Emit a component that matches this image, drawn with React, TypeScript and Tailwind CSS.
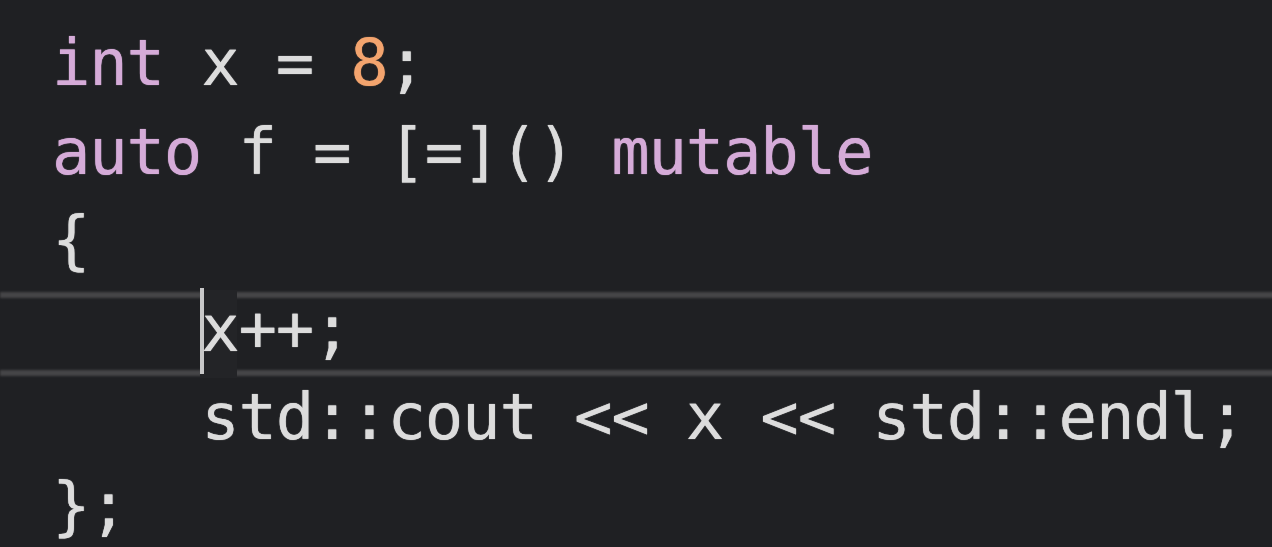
const kw = "text-[#d5abd8]";
const num = "text-[#f3a46e]";

function Line({ children, current }: { children?: React.ReactNode; current?: boolean }) {
  return (
    <div className="relative h-[88.6px] whitespace-pre">
      {current && (
        <>
          <span aria-hidden className="absolute inset-x-[-52px] top-[7px] h-[84px] border-y-[6px] border-[#454547] blur-[0.8px]" />
          <span aria-hidden className="absolute left-[148px] top-[5px] h-[88px] w-[37px] bg-[#232427]" />
          <span aria-hidden className="absolute left-[148px] top-[3px] h-[86px] w-[4px] bg-[#c8c8c8]" />
        </>
      )}
      <span className="relative">{children}</span>
    </div>
  );
}

export default function App() {
  return (
    <div className="h-[547px] w-[1272px] overflow-hidden bg-[#1f2023] pl-[52px] pt-[19px] font-['DejaVu_Sans_Mono',monospace] text-[64px] leading-[88.6px] tracking-[-1.25px] text-[#dcdcdc] antialiased [text-shadow:0_0_1px_currentColor]">
      <Line>
        <span className={kw}>int</span> x = <span className={num}>8</span>;
      </Line>
      <Line>
        <span className={kw}>auto</span> f = [=]() <span className={kw}>mutable</span>
      </Line>
      <Line>{"{"}</Line>
      <Line current>{"    x++;"}</Line>
      <Line>{"    std::cout << x << std::endl;"}</Line>
      <Line>{"};"}</Line>
    </div>
  );
}
